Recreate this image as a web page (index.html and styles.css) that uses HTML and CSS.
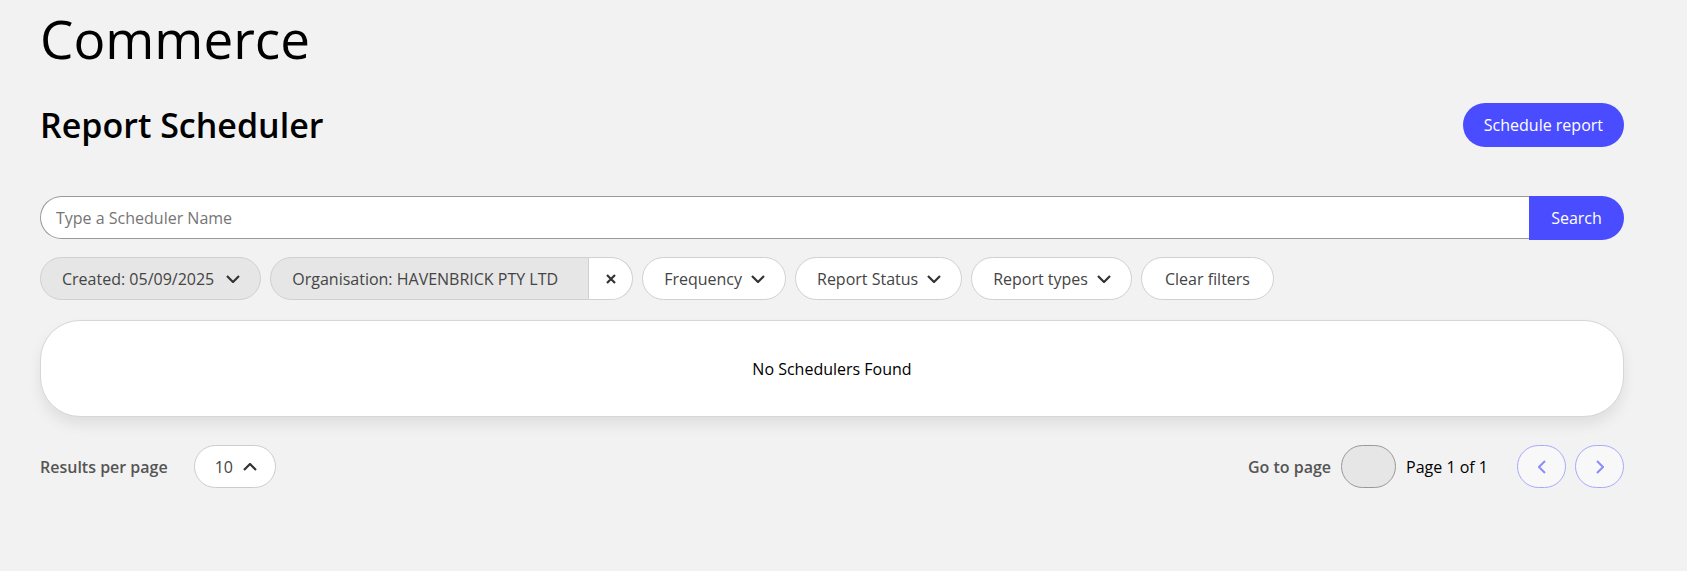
FILE: index.html
```html
<!DOCTYPE html>
<html lang="en">

<head>
    <meta charset="UTF-8">
    <meta name="viewport" content="width=device-width, initial-scale=1.0">
    <title>Report Scheduler</title>

    <link rel="stylesheet" href="styles.css">
</head>

<body>

    <div class="page">
        <h1 class="app-title">Commerce</h1>

        <div class="page-header">
            <h2>Report Scheduler</h2>
            <button type="button" class="primary-button">Schedule report</button>
        </div>

        <form class="search-bar" onsubmit="return false">
            <input type="text" placeholder="Type a Scheduler Name" />
            <button type="submit" class="search-button">Search</button>
        </form>

        <div class="filters">
            <button type="button" class="chip chip-active">
                Created: 05/09/2025
                <svg class="chevron" viewBox="0 0 14 8"><path d="M1 1l6 6 6-6" /></svg>
            </button>
            <div class="chip-group">
                <span class="chip chip-active chip-left">Organisation: HAVENBRICK PTY LTD</span>
                <button type="button" class="chip chip-clear" aria-label="Remove">
                    <svg viewBox="0 0 10 10"><path d="M1 1l8 8M9 1l-8 8" /></svg>
                </button>
            </div>
            <button type="button" class="chip">
                Frequency
                <svg class="chevron" viewBox="0 0 14 8"><path d="M1 1l6 6 6-6" /></svg>
            </button>
            <button type="button" class="chip">
                Report Status
                <svg class="chevron" viewBox="0 0 14 8"><path d="M1 1l6 6 6-6" /></svg>
            </button>
            <button type="button" class="chip">
                Report types
                <svg class="chevron" viewBox="0 0 14 8"><path d="M1 1l6 6 6-6" /></svg>
            </button>
            <button type="button" class="chip chip-plain">Clear filters</button>
        </div>

        <div class="results-card">
            <p>No Schedulers Found</p>
        </div>

        <div class="pagination">
            <div class="per-page">
                <span class="label">Results per page</span>
                <button type="button" class="page-size">
                    10
                    <svg class="chevron" viewBox="0 0 14 8"><path d="M1 7l6-6 6 6" /></svg>
                </button>
            </div>
            <div class="pager">
                <span class="label">Go to page</span>
                <input type="text" class="page-input" />
                <span class="page-count">Page 1 of 1</span>
                <div class="pager-buttons">
                    <button type="button" class="nav-button" aria-label="Previous">
                        <svg viewBox="0 0 8 14"><path d="M7 1L1 7l6 6" /></svg>
                    </button>
                    <button type="button" class="nav-button" aria-label="Next">
                        <svg viewBox="0 0 8 14"><path d="M1 1l6 6-6 6" /></svg>
                    </button>
                </div>
            </div>
        </div>
    </div>

</body>

</html>
```

FILE: styles.css
```css
body {
    margin: 0;
    background-color: #f2f2f2;
    font-family: "Open Sans", "Noto Sans", sans-serif;
    color: #000;
}

.page {
    padding: 0 63px 0 40px;
}

.app-title {
    margin: 0;
    padding-top: 4px;
    font-size: 53px;
    font-weight: 500;
    line-height: 70px;
}

.page-header {
    display: flex;
    justify-content: space-between;
    align-items: center;
    margin-top: 29px;
}

.page-header h2 {
    margin: 0;
    font-size: 34px;
    font-weight: 600;
    line-height: 44px;
}

.primary-button {
    height: 44px;
    padding: 0 21px;
    border: none;
    border-radius: 22px;
    background-color: #4a4dff;
    color: #fff;
    font-family: inherit;
    font-size: 16px;
    cursor: pointer;
}

.search-bar {
    display: flex;
    margin-top: 49px;
}

.search-bar input {
    flex: 1;
    height: 43px;
    box-sizing: border-box;
    padding: 0 15px;
    border: 1px solid #999;
    border-right: none;
    border-radius: 22px 0 0 22px;
    background: #fff;
    font-family: inherit;
    font-size: 16px;
    outline: none;
}

.search-bar input::placeholder {
    color: #757575;
}

.search-button {
    width: 95px;
    height: 44px;
    border: none;
    border-radius: 0 22px 22px 0;
    background-color: #4a4dff;
    color: #fff;
    font-family: inherit;
    font-size: 16px;
    cursor: pointer;
}

.filters {
    display: flex;
    gap: 9px;
    margin-top: 17px;
}

.chip {
    display: flex;
    align-items: center;
    gap: 9px;
    height: 43px;
    box-sizing: border-box;
    padding: 0 20px 0 21px;
    border: 1px solid #d0d0d0;
    border-radius: 22px;
    background: #fff;
    color: #444;
    font-family: inherit;
    font-size: 16px;
    white-space: nowrap;
    cursor: pointer;
}

.chip-active {
    gap: 12px;
    background: #e6e6e6;
}

.chip-plain {
    padding: 0 23px;
}

.chevron {
    width: 14px;
    height: 8px;
    fill: none;
    stroke: #333;
    stroke-width: 2.2;
}

.chip-group {
    display: flex;
}

.chip-left {
    border-radius: 22px 0 0 22px;
    padding-right: 30px;
}

.chip-clear {
    width: 44px;
    justify-content: center;
    padding: 0;
    border-left: none;
    border-radius: 0 22px 22px 0;
}

.chip-clear svg {
    width: 10px;
    height: 10px;
    fill: none;
    stroke: #333;
    stroke-width: 2.2;
}

.results-card {
    display: flex;
    justify-content: center;
    align-items: center;
    height: 97px;
    margin-top: 20px;
    border: 1px solid #d6d6d6;
    border-radius: 40px;
    background: #fff;
    box-shadow: 0 8px 14px rgba(0, 0, 0, 0.08);
    box-sizing: border-box;
}

.results-card p {
    margin: 0;
    font-size: 16px;
}

.pagination {
    display: flex;
    justify-content: space-between;
    align-items: center;
    margin-top: 28px;
}

.per-page,
.pager {
    display: flex;
    align-items: center;
}

.label {
    color: #555;
    font-size: 16px;
    font-weight: 600;
}

.page-size {
    display: flex;
    align-items: center;
    gap: 10px;
    height: 43px;
    margin-left: 26px;
    padding: 0 18px 0 20px;
    border: 1px solid #ccc;
    border-radius: 22px;
    background: #fff;
    color: #444;
    font-family: inherit;
    font-size: 16px;
}

.page-input {
    width: 55px;
    height: 43px;
    box-sizing: border-box;
    margin: 0 10px;
    border: 1px solid #999;
    border-radius: 22px;
    background: #e6e6e6;
}

.page-count {
    font-size: 16px;
}

.pager-buttons {
    display: flex;
    gap: 9px;
    margin-left: 29px;
}

.nav-button {
    display: flex;
    justify-content: center;
    align-items: center;
    width: 49px;
    height: 43px;
    border: 1px solid #a8a8ff;
    border-radius: 22px;
    background: #f8f8f8;
    cursor: pointer;
}

.nav-button svg {
    width: 8px;
    height: 14px;
    fill: none;
    stroke: #8c8cff;
    stroke-width: 2;
}
```
